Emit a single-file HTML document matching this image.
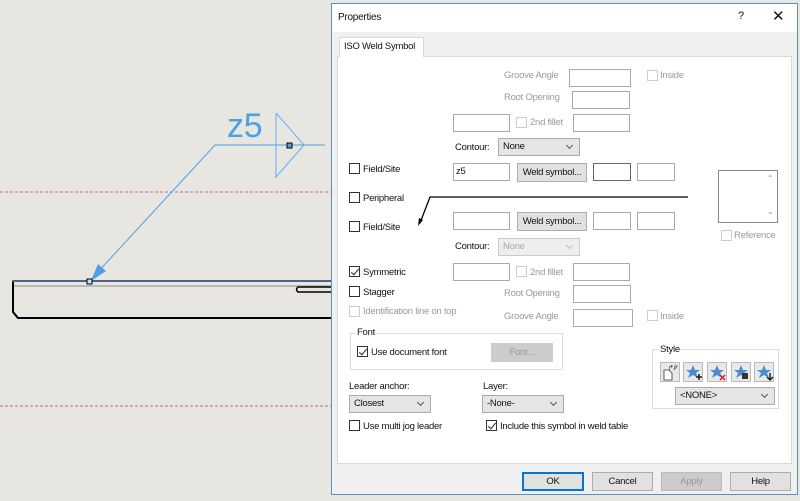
<!DOCTYPE html>
<html><head><style>
*{margin:0;padding:0;box-sizing:border-box}
body{width:800px;height:501px;overflow:hidden;background:#e7e6e0;font-family:"Liberation Sans",sans-serif;font-size:9.5px;letter-spacing:-0.25px;color:#111;position:relative}
.a{position:absolute}
.in{position:absolute;background:#fff;border:1px solid #aaa;height:18px}
.in.d{border-color:#ccc}
.cb{position:absolute;width:11px;height:11px;border:1px solid #333;background:#fff}
.cb.d{border-color:#ccc}
.cb.c::after{content:"";position:absolute;left:3px;top:0px;width:3px;height:7px;border:solid #222;border-width:0 1.3px 1.3px 0;transform:rotate(40deg)}
.t{position:absolute;white-space:nowrap}
.g{color:#9a9a9a}
.btn{position:absolute;background:#e1e1e1;border:1px solid #adadad;text-align:center;line-height:17px}
.sel{position:absolute;background:#e5e5e5;border:1px solid #ababab;height:18px;line-height:16px;padding-left:4px}
.sel::after{content:"";position:absolute;right:7px;top:4px;width:4px;height:4px;border:solid #555;border-width:0 1px 1px 0;transform:rotate(45deg)}
.sel.d{color:#aaa;border-color:#ccc;background:#eee}
.sel.d::after{border-color:#bbb}
.ic{position:absolute;top:362px;width:20px;height:20px;background:#e8e8e8;border:1px solid #bbb}
</style></head><body>
<svg class="a" style="left:0;top:0" width="335" height="501">
<line x1="0" y1="192" x2="332" y2="192" stroke="#c060c0" stroke-width="1" stroke-dasharray="3,2"/>
<line x1="0" y1="406" x2="332" y2="406" stroke="#c060c0" stroke-width="1" stroke-dasharray="3,2"/>
<text x="227" y="137" font-family="Liberation Sans" font-size="34" fill="#4f9fe6">z5</text>
<polyline points="276,113 304,145 276,177 276,113" fill="none" stroke="#6aaef0" stroke-width="1"/>
<polyline points="325,145 215,145 96,274" fill="none" stroke="#4f9fe6" stroke-width="1"/>
<polygon points="91,281 98,264 106,271" fill="#4f9fe6"/>
<rect x="287" y="143" width="5" height="5" fill="#5aa0e0" stroke="#000"/>
<line x1="12" y1="281" x2="332" y2="281" stroke="#1a3a6a" stroke-width="1.5"/>
<line x1="14" y1="286" x2="332" y2="286" stroke="#aaa" stroke-width="1.5"/>
<polyline points="13,282 13,312 18,318 332,318" fill="none" stroke="#000" stroke-width="2"/>
<path d="M332,287 H298 Q295,289.5 298,292 H332" fill="none" stroke="#000" stroke-width="1.5"/>
<rect x="87" y="279" width="5" height="5" fill="#bfe0ff" stroke="#000"/>
</svg>
<div class="a" style="left:331px;top:3px;width:467px;height:492px;background:#f0f0f0;border:1px solid #5b8fc9"></div>
<div class="a" style="left:332px;top:4px;width:465px;height:28px;background:#fff"></div>
<div class="t" style="left:338px;top:12px;font-size:10px">Properties</div>
<div class="t" style="left:738px;top:10px;font-size:11px">?</div>
<div class="t" style="left:772px;top:7px;font-size:15px">✕</div>
<div class="a" style="left:337px;top:56px;width:455px;height:408px;background:#fff;border:1px solid #d9d9d9"></div>
<div class="a" style="left:339px;top:37px;width:85px;height:20px;background:#fff;border:1px solid #d9d9d9;border-bottom:none"></div>
<div class="t" style="left:344px;top:41px">ISO Weld Symbol</div>

<div class="t g" style="left:504px;top:70px">Groove Angle</div>
<div class="in" style="left:569px;top:69px;width:62px"></div>
<div class="cb d" style="left:647px;top:70px"></div><div class="t g" style="left:660px;top:70px">Inside</div>
<div class="t g" style="left:504px;top:92px">Root Opening</div>
<div class="in" style="left:572px;top:91px;width:58px"></div>
<div class="in" style="left:453px;top:114px;width:57px"></div>
<div class="cb d" style="left:516px;top:117px"></div><div class="t g" style="left:530px;top:117px">2nd fillet</div>
<div class="in" style="left:573px;top:114px;width:57px"></div>
<div class="t" style="left:455px;top:142px">Contour:</div>
<div class="sel" style="left:498px;top:138px;width:82px">None</div>

<div class="cb" style="left:349px;top:163px"></div><div class="t" style="left:363px;top:164px">Field/Site</div>
<div class="in" style="left:453px;top:163px;width:57px;padding-left:2px;line-height:16px">z5</div>
<div class="btn" style="left:517px;top:163px;width:70px">Weld symbol...</div>
<div class="in" style="left:593px;top:163px;width:38px;border-color:#666"></div>
<div class="in" style="left:637px;top:163px;width:38px"></div>
<div class="cb" style="left:349px;top:192px"></div><div class="t" style="left:363px;top:193px">Peripheral</div>
<svg class="a" style="left:410px;top:190px" width="285" height="40"><polyline points="278,7 20,7 10,33" fill="none" stroke="#000" stroke-width="1.3"/><polygon points="8,36 9,28 13,30" fill="#000"/></svg>
<div class="cb" style="left:349px;top:221px"></div><div class="t" style="left:363px;top:222px">Field/Site</div>
<div class="in" style="left:453px;top:212px;width:57px"></div>
<div class="btn" style="left:517px;top:212px;width:70px">Weld symbol...</div>
<div class="in" style="left:593px;top:212px;width:38px"></div>
<div class="in" style="left:637px;top:212px;width:38px"></div>
<div class="in" style="left:718px;top:170px;width:60px;height:53px;border-color:#888"></div>
<div class="t g" style="left:767px;top:174px;font-size:8px">⌃</div><div class="t g" style="left:767px;top:207px;font-size:8px">⌄</div>
<div class="cb d" style="left:721px;top:230px"></div><div class="t g" style="left:734px;top:230px">Reference</div>
<div class="t" style="left:455px;top:241px">Contour:</div>
<div class="sel d" style="left:498px;top:238px;width:82px">None</div>

<div class="cb c" style="left:349px;top:266px"></div><div class="t" style="left:363px;top:267px">Symmetric</div>
<div class="in" style="left:453px;top:263px;width:57px"></div>
<div class="cb d" style="left:516px;top:266px"></div><div class="t g" style="left:530px;top:267px">2nd fillet</div>
<div class="in" style="left:573px;top:263px;width:57px"></div>
<div class="cb" style="left:349px;top:286px"></div><div class="t" style="left:363px;top:287px">Stagger</div>
<div class="t g" style="left:504px;top:288px">Root Opening</div>
<div class="in" style="left:573px;top:285px;width:58px"></div>
<div class="cb d" style="left:349px;top:306px"></div><div class="t g" style="left:363px;top:306px">Identification line on top</div>
<div class="t g" style="left:504px;top:311px">Groove Angle</div>
<div class="in" style="left:573px;top:309px;width:60px"></div>
<div class="cb d" style="left:647px;top:310px"></div><div class="t g" style="left:660px;top:311px">Inside</div>

<div class="a" style="left:350px;top:333px;width:213px;height:37px;border:1px solid #dcdcdc"></div>
<div class="t" style="left:356px;top:327px;background:#fff;padding:0 1px">Font</div>
<div class="cb c" style="left:357px;top:346px"></div><div class="t" style="left:371px;top:347px">Use document font</div>
<div class="btn g" style="left:491px;top:343px;width:62px;border-color:#ccc;background:#ccc;color:#999">Font...</div>

<div class="a" style="left:652px;top:349px;width:127px;height:60px;border:1px solid #dcdcdc"></div>
<div class="t" style="left:659px;top:344px;background:#fff;padding:0 1px">Style</div>
<div class="ic" style="left:660px"></div><div class="ic" style="left:683px"></div><div class="ic" style="left:707px"></div><div class="ic" style="left:731px"></div><div class="ic" style="left:754px"></div>
<svg class="a" style="left:660px;top:362px" width="115" height="20">
<path d="M4,8 V18 H12 V11 L9,8 Z" fill="#fff" stroke="#333" stroke-width="0.8"/><text x="8" y="8" font-size="7" fill="#333" font-family="Liberation Sans">↱/⁄ʳ</text>
<g fill="#4a8ccc"><polygon points="33,3 35,8 40,8 36,11 38,16 33,13 28,16 30,11 26,8 31,8"/><polygon points="57,3 59,8 64,8 60,11 62,16 57,13 52,16 54,11 50,8 55,8"/><polygon points="81,3 83,8 88,8 84,11 86,16 81,13 76,16 78,11 74,8 79,8"/><polygon points="104,3 106,8 111,8 107,11 109,16 104,13 99,16 101,11 97,8 102,8"/></g>
<path d="M36,15 H42 M39,12 V18" stroke="#222" stroke-width="1.6"/>
<path d="M60,13 L65,18 M65,13 L60,18" stroke="#d22" stroke-width="1.5"/>
<rect x="82" y="11" width="6" height="6" fill="#333"/>
<path d="M110,11 V17 M107,15 L110,18 L113,15" stroke="#222" stroke-width="1.5" fill="none"/>
</svg>
<div class="sel" style="left:675px;top:387px;width:100px">&lt;NONE&gt;</div>

<div class="t" style="left:349px;top:381px">Leader anchor:</div>
<div class="sel" style="left:349px;top:395px;width:82px">Closest</div>
<div class="t" style="left:483px;top:381px">Layer:</div>
<div class="sel" style="left:482px;top:395px;width:82px">-None-</div>
<div class="cb" style="left:349px;top:420px"></div><div class="t" style="left:363px;top:421px">Use multi jog leader</div>
<div class="cb c" style="left:486px;top:420px"></div><div class="t" style="left:500px;top:421px">Include this symbol in weld table</div>

<div class="btn" style="left:522px;top:472px;width:62px;border:2px solid #0078d7;line-height:15px">OK</div>
<div class="btn" style="left:592px;top:472px;width:61px">Cancel</div>
<div class="btn" style="left:661px;top:472px;width:61px;color:#999;background:#ccc;border-color:#bbb">Apply</div>
<div class="btn" style="left:730px;top:472px;width:61px">Help</div>
</body></html>
